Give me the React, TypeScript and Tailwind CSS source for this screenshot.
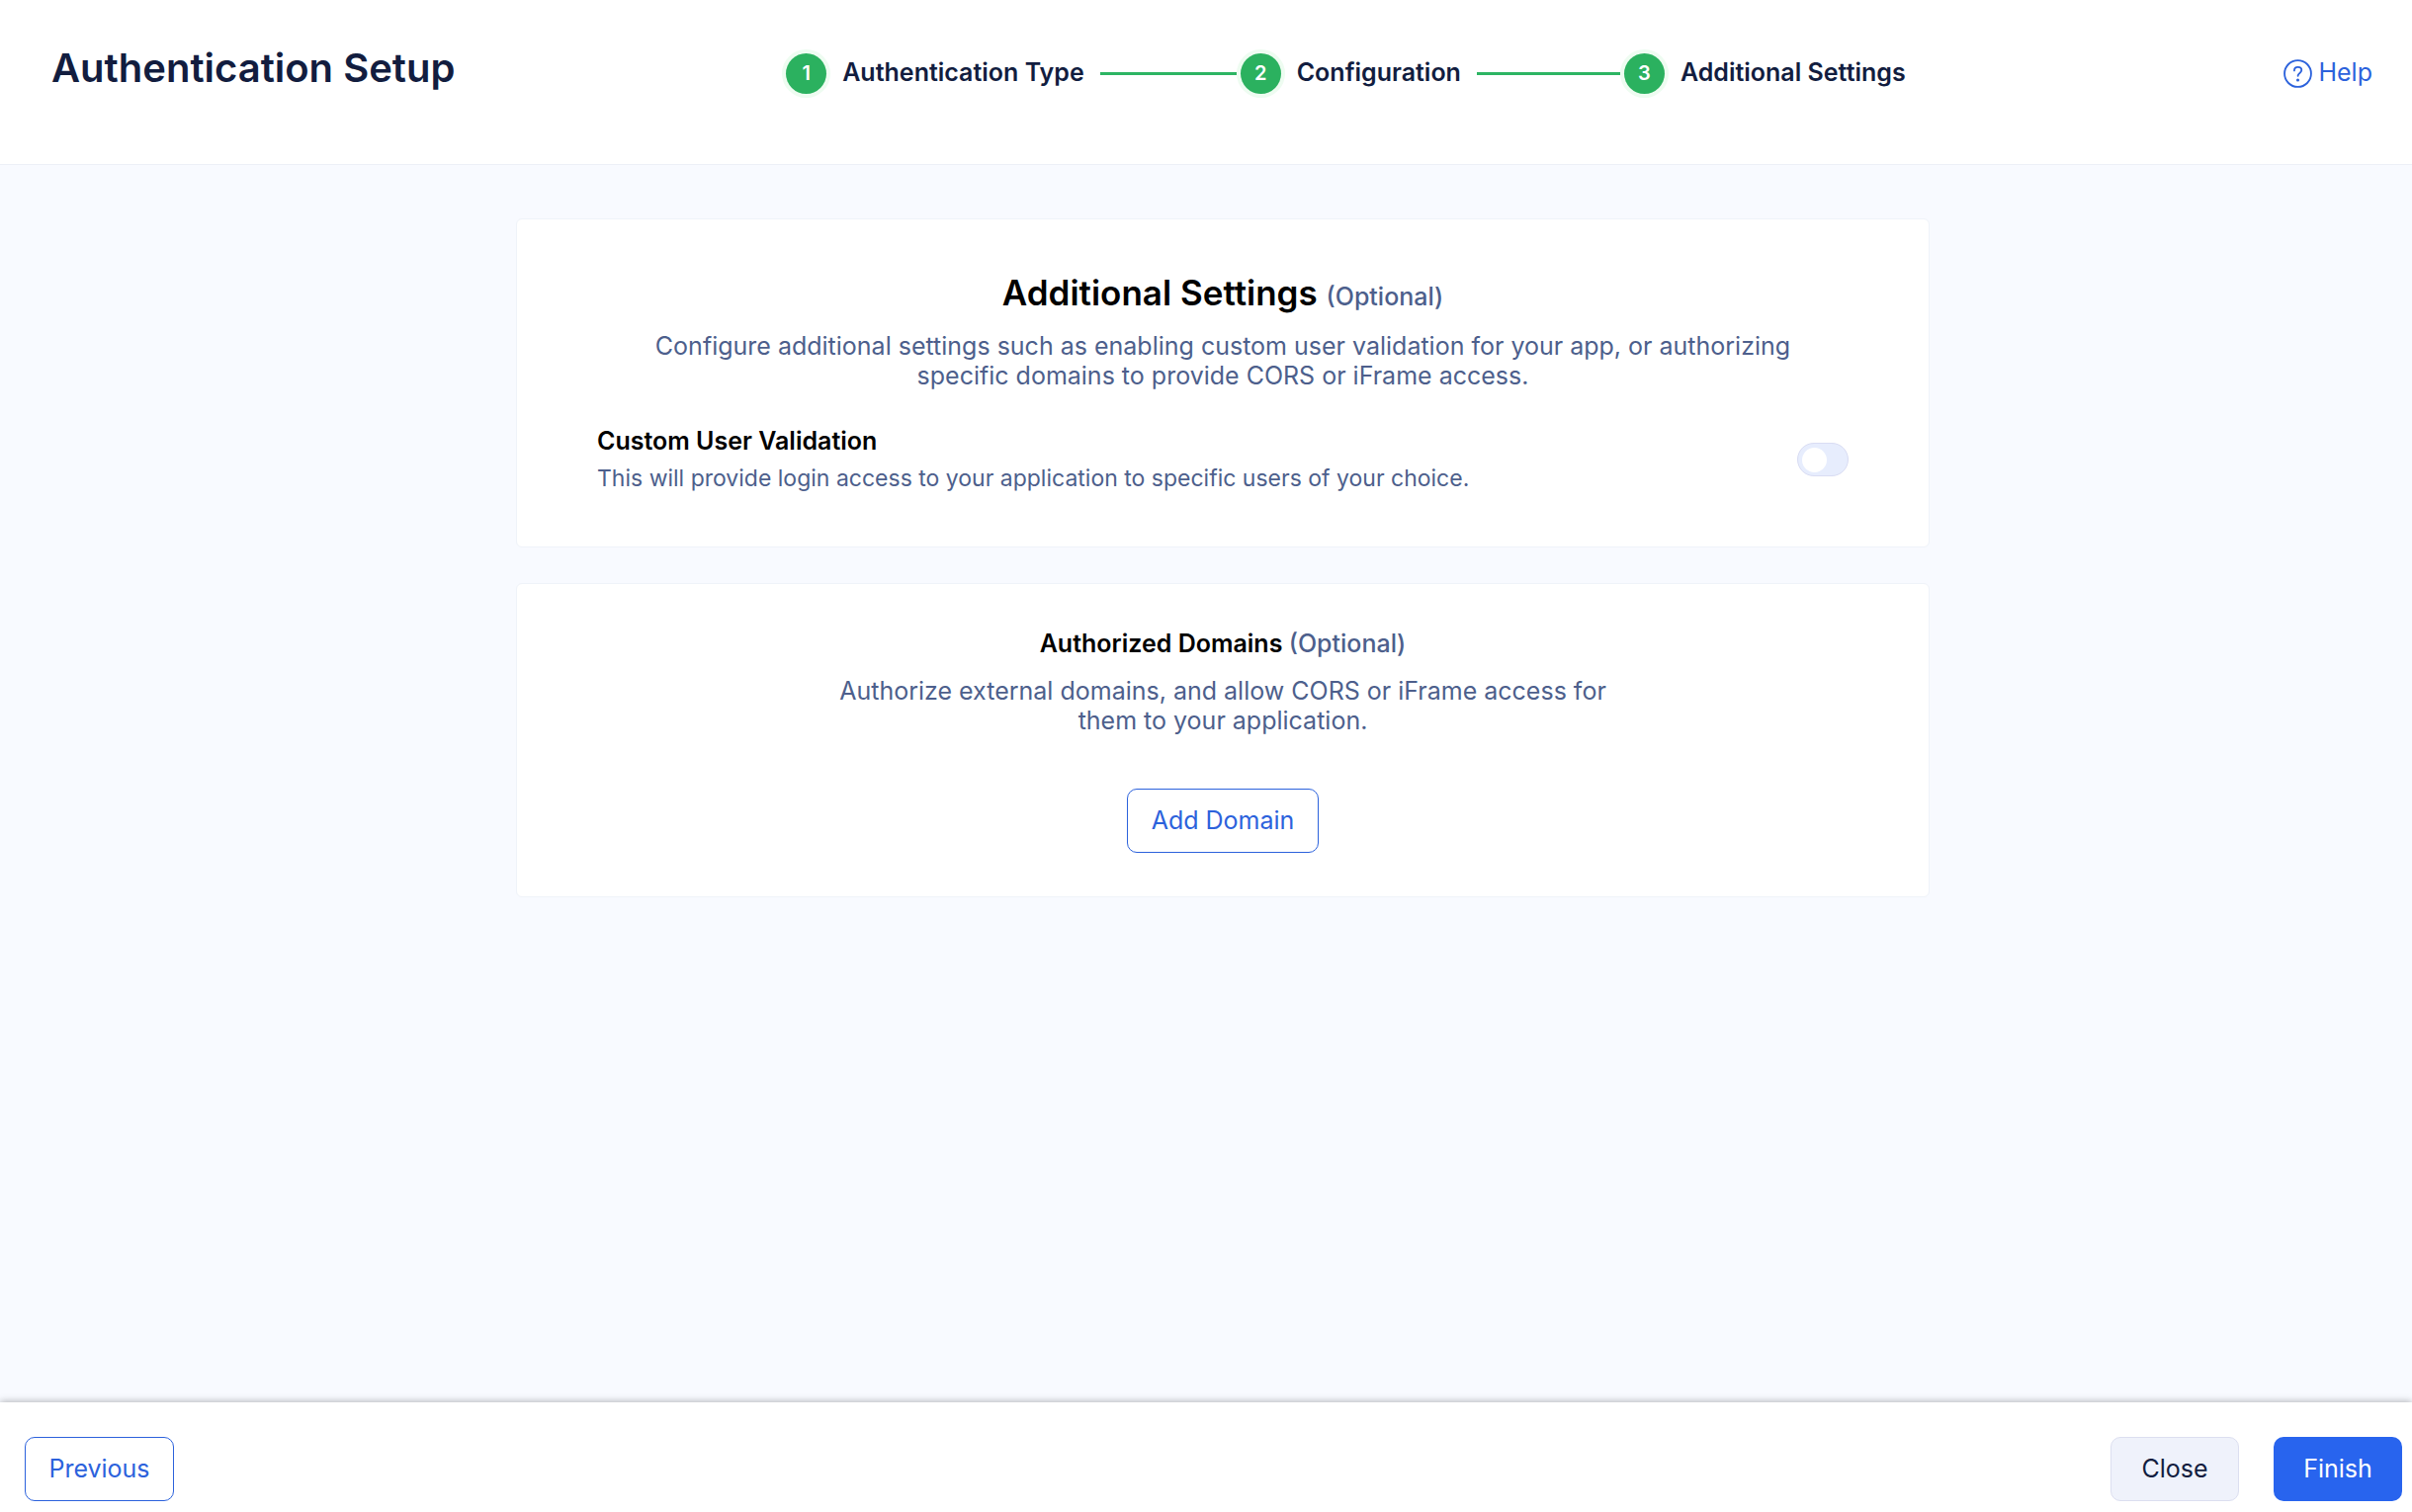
import { Fragment, useState } from "react";
import { clsx } from "clsx";

const STEPS = [
  { label: "Authentication Type", line: "" },
  { label: "Configuration", line: "w-[138px]" },
  { label: "Additional Settings", line: "w-[145px]" },
];

function HelpIcon() {
  return (
    <svg viewBox="0 0 30 30" fill="none" stroke="currentColor" className="size-[29px]" aria-hidden="true">
      <circle cx="15" cy="15" r="13.9" strokeWidth="1.9" />
      <path
        d="M11.3 11.8c0-2.2 1.6-3.7 3.8-3.7s3.8 1.4 3.8 3.4c0 2.9-3.8 2.9-3.8 5.8"
        strokeWidth="1.9"
        strokeLinecap="round"
      />
      <circle cx="15" cy="21.7" r="1.6" fill="currentColor" stroke="none" />
    </svg>
  );
}

function Stepper() {
  return (
    <ol className="flex items-center">
      {STEPS.map(({ label, line }, i) => (
        <Fragment key={label}>
          {line && <li aria-hidden="true" className={clsx("ml-4 mr-1 h-[3px] bg-[#2db563]", line)} />}
          <li className="flex items-center gap-4">
            <span className="flex size-[41px] items-center justify-center rounded-full bg-[#2bb15f] text-xl font-semibold text-white ring-4 ring-[#eefcf1]">
              {i + 1}
            </span>
            <span className="text-[25px] font-semibold">{label}</span>
          </li>
        </Fragment>
      ))}
    </ol>
  );
}

interface SwitchProps {
  id: string;
  checked: boolean;
  onChange: (checked: boolean) => void;
}

function Switch({ id, checked, onChange }: SwitchProps) {
  return (
    <span
      className={clsx(
        "relative flex h-[34px] w-[52px] shrink-0 items-center rounded-full border px-1",
        checked ? "justify-end border-[#2864ee] bg-[#2864ee]" : "border-[#d9dcf3] bg-[#e7edfd]"
      )}
    >
      <span className="size-[25px] rounded-full bg-white" />
      <input
        id={id}
        type="checkbox"
        role="switch"
        checked={checked}
        onChange={(e) => onChange(e.target.checked)}
        className="absolute inset-0 size-full cursor-pointer opacity-0"
      />
    </span>
  );
}

function Optional() {
  return <span className="text-[25px] leading-none font-medium text-[#4d5f8c]">(Optional)</span>;
}

export default function App() {
  const [customValidation, setCustomValidation] = useState(false);

  return (
    <div className="flex min-h-screen flex-col bg-[#f8faff] font-['Inter',sans-serif] text-[#121d3f]">
      {/* Header */}
      <header className="flex items-start justify-between border-b border-[#edf0f7] bg-white pt-11 pr-10 pb-[62px] pl-[52px]">
        <h1 className="text-[40px] leading-[50px] font-semibold">Authentication Setup</h1>
        <div className="mr-12 flex h-[60px] items-center">
          <Stepper />
        </div>
        <a href="#help" className="flex h-[60px] items-center gap-[6px] text-[25px] text-[#2c62dc]">
          <HelpIcon />
          Help
        </a>
      </header>

      {/* Settings */}
      <main className="flex flex-1 flex-col items-center gap-9 pt-[54px] pb-14 pl-[34px]">
        <section className="w-full max-w-[1430px] rounded-md border border-[#eff3f9] bg-white px-[81px] pt-12 pb-[50px]">
          <h2 className="text-center text-[35px] leading-[53px] font-semibold text-black">
            Additional Settings <Optional />
          </h2>
          <p className="mx-auto mt-3 max-w-[1200px] text-center text-[25px] leading-[30px] text-[#4d5f8c]">
            Configure additional settings such as enabling custom user validation for your app, or authorizing specific
            domains to provide CORS or iFrame access.
          </p>
          <div className="mt-8 flex items-center justify-between">
            <div>
              <label htmlFor="custom-validation" className="block text-[25px] leading-[38px] font-semibold text-black">
                Custom User Validation
              </label>
              <p className="text-[23px] leading-[38px] text-[#4d5f8c]">
                This will provide login access to your application to specific users of your choice.
              </p>
            </div>
            <Switch id="custom-validation" checked={customValidation} onChange={setCustomValidation} />
          </div>
        </section>

        <section className="flex w-full max-w-[1430px] flex-col items-center rounded-md border border-[#eff3f9] bg-white px-[81px] pt-[43px] pb-11">
          <h2 className="text-center text-[25px] leading-[34px] font-semibold text-black">
            Authorized Domains <Optional />
          </h2>
          <p className="mt-4 max-w-[800px] text-center text-[25px] leading-[30px] text-[#4d5f8c]">
            Authorize external domains, and allow CORS or iFrame access for them to your application.
          </p>
          <button
            type="button"
            className="mt-[54px] h-[65px] w-[194px] rounded-[10px] border border-[#2c62dc] text-[25px] text-[#2c62dc]"
          >
            Add Domain
          </button>
        </section>
      </main>

      {/* Footer actions */}
      <footer className="flex items-center gap-[35px] bg-white pt-[35px] pr-[10px] pb-[11px] pl-[25px] text-[25px] shadow-[0_-1px_7px_rgba(0,0,0,0.28)]">
        <button type="button" className="mr-auto h-[65px] w-[151px] rounded-[10px] border border-[#2c62dc] text-[#2c62dc]">
          Previous
        </button>
        <button type="button" className="h-[65px] w-[130px] rounded-[10px] border border-[#dcdff0] bg-[#eff2fb]">
          Close
        </button>
        <button type="button" className="h-[65px] w-[130px] rounded-[10px] bg-[#2864ee] text-white">
          Finish
        </button>
      </footer>
    </div>
  );
}
